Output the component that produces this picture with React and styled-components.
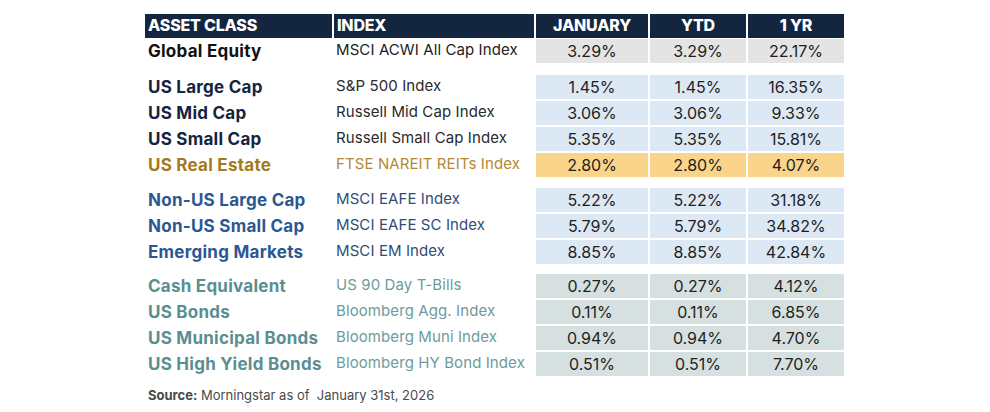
import * as React from 'react'
import styled, { createGlobalStyle } from 'styled-components'

const GlobalStyle = createGlobalStyle`
  html, body {
    margin: 0;
    background: #ffffff;
  }
  body {
    font-family: Inter, "Open Sans", sans-serif;
  }
`

const COLS = '187px 200px 112px 96px 96px'

const tones = {
  global: { name: '#111111', index: '#222222', cell: '#e4e4e4' },
  us: { name: '#16233f', index: '#2a2a2a', cell: '#dce8f4' },
  estate: { name: '#a57a1c', index: '#b28a33', cell: '#fad48a' },
  intl: { name: '#2b5792', index: '#2f4d78', cell: '#dce8f4' },
  bonds: { name: '#5a8e90', index: '#6c9b9d', cell: '#d6e0e0' },
}

const groups = [
  [['Global Equity', 'MSCI ACWI All Cap Index', '3.29%', '3.29%', '22.17%', 'global']],
  [
    ['US Large Cap', 'S&P 500 Index', '1.45%', '1.45%', '16.35%', 'us'],
    ['US Mid Cap', 'Russell Mid Cap Index', '3.06%', '3.06%', '9.33%', 'us'],
    ['US Small Cap', 'Russell Small Cap Index', '5.35%', '5.35%', '15.81%', 'us'],
    ['US Real Estate', 'FTSE NAREIT REITs Index', '2.80%', '2.80%', '4.07%', 'estate'],
  ],
  [
    ['Non-US Large Cap', 'MSCI EAFE Index', '5.22%', '5.22%', '31.18%', 'intl'],
    ['Non-US Small Cap', 'MSCI EAFE SC Index', '5.79%', '5.79%', '34.82%', 'intl'],
    ['Emerging Markets', 'MSCI EM Index', '8.85%', '8.85%', '42.84%', 'intl'],
  ],
  [
    ['Cash Equivalent', 'US 90 Day T-Bills', '0.27%', '0.27%', '4.12%', 'bonds'],
    ['US Bonds', 'Bloomberg Agg. Index', '0.11%', '0.11%', '6.85%', 'bonds'],
    ['US Municipal Bonds', 'Bloomberg Muni Index', '0.94%', '0.94%', '4.70%', 'bonds'],
    ['US High Yield Bonds', 'Bloomberg HY Bond Index', '0.51%', '0.51%', '7.70%', 'bonds'],
  ],
]

const Page = styled.div`
  padding: 14px 0 0 145px;
`

const Table = styled.div`
  width: 699px;
`

const HeaderRow = styled.div`
  display: grid;
  grid-template-columns: ${COLS};
  column-gap: 2px;
  height: 24px;
`

const HeadCell = styled.div`
  background: #14253f;
  color: #ffffff;
  font-weight: 800;
  font-size: 16px;
  letter-spacing: -0.2px;
  line-height: 22px;
  padding-left: ${(p) => (p.$center ? '0' : '3px')};
  text-align: ${(p) => (p.$center ? 'center' : 'left')};
  white-space: nowrap;
`

const Group = styled.div`
  display: grid;
  row-gap: 2px;
  margin-top: ${(p) => p.$gap}px;
`

const Row = styled.div`
  display: grid;
  grid-template-columns: ${COLS};
  column-gap: 2px;
  height: 24px;
  align-items: center;
`

const AssetName = styled.div`
  color: ${(p) => p.$color};
  font-weight: 700;
  font-size: 17px;
  letter-spacing: 0.25px;
  padding-left: 3px;
  white-space: nowrap;
`

const IndexName = styled.div`
  color: ${(p) => p.$color};
  font-size: 15px;
  letter-spacing: 0.1px;
  padding: 0 0 4px 2px;
  white-space: nowrap;
`

const Value = styled.div`
  background: ${(p) => p.$bg};
  color: #1e1e1e;
  font-size: 16px;
  height: 100%;
  display: flex;
  align-items: center;
  justify-content: center;
`

const Source = styled.p`
  margin: 11px 0 0 3px;
  color: #4a4a4a;
  font-size: 13px;

  b {
    font-weight: 700;
  }
`

const groupGaps = [1, 12, 11, 10]

export default function App() {
  return (
    <Page>
      <GlobalStyle />
      <Table>
        <HeaderRow>
          <HeadCell>ASSET CLASS</HeadCell>
          <HeadCell>INDEX</HeadCell>
          <HeadCell $center>JANUARY</HeadCell>
          <HeadCell $center>YTD</HeadCell>
          <HeadCell $center>1 YR</HeadCell>
        </HeaderRow>
        {groups.map((rows, g) => (
          <Group key={g} $gap={groupGaps[g]}>
            {rows.map(([name, index, jan, ytd, yr, tone]) => {
              const t = tones[tone]
              return (
                <Row key={name}>
                  <AssetName $color={t.name}>{name}</AssetName>
                  <IndexName $color={t.index}>{index}</IndexName>
                  <Value $bg={t.cell}>{jan}</Value>
                  <Value $bg={t.cell}>{ytd}</Value>
                  <Value $bg={t.cell}>{yr}</Value>
                </Row>
              )
            })}
          </Group>
        ))}
      </Table>
      <Source>
        <b>Source:</b> Morningstar as of&nbsp; January 31st, 2026
      </Source>
    </Page>
  )
}
